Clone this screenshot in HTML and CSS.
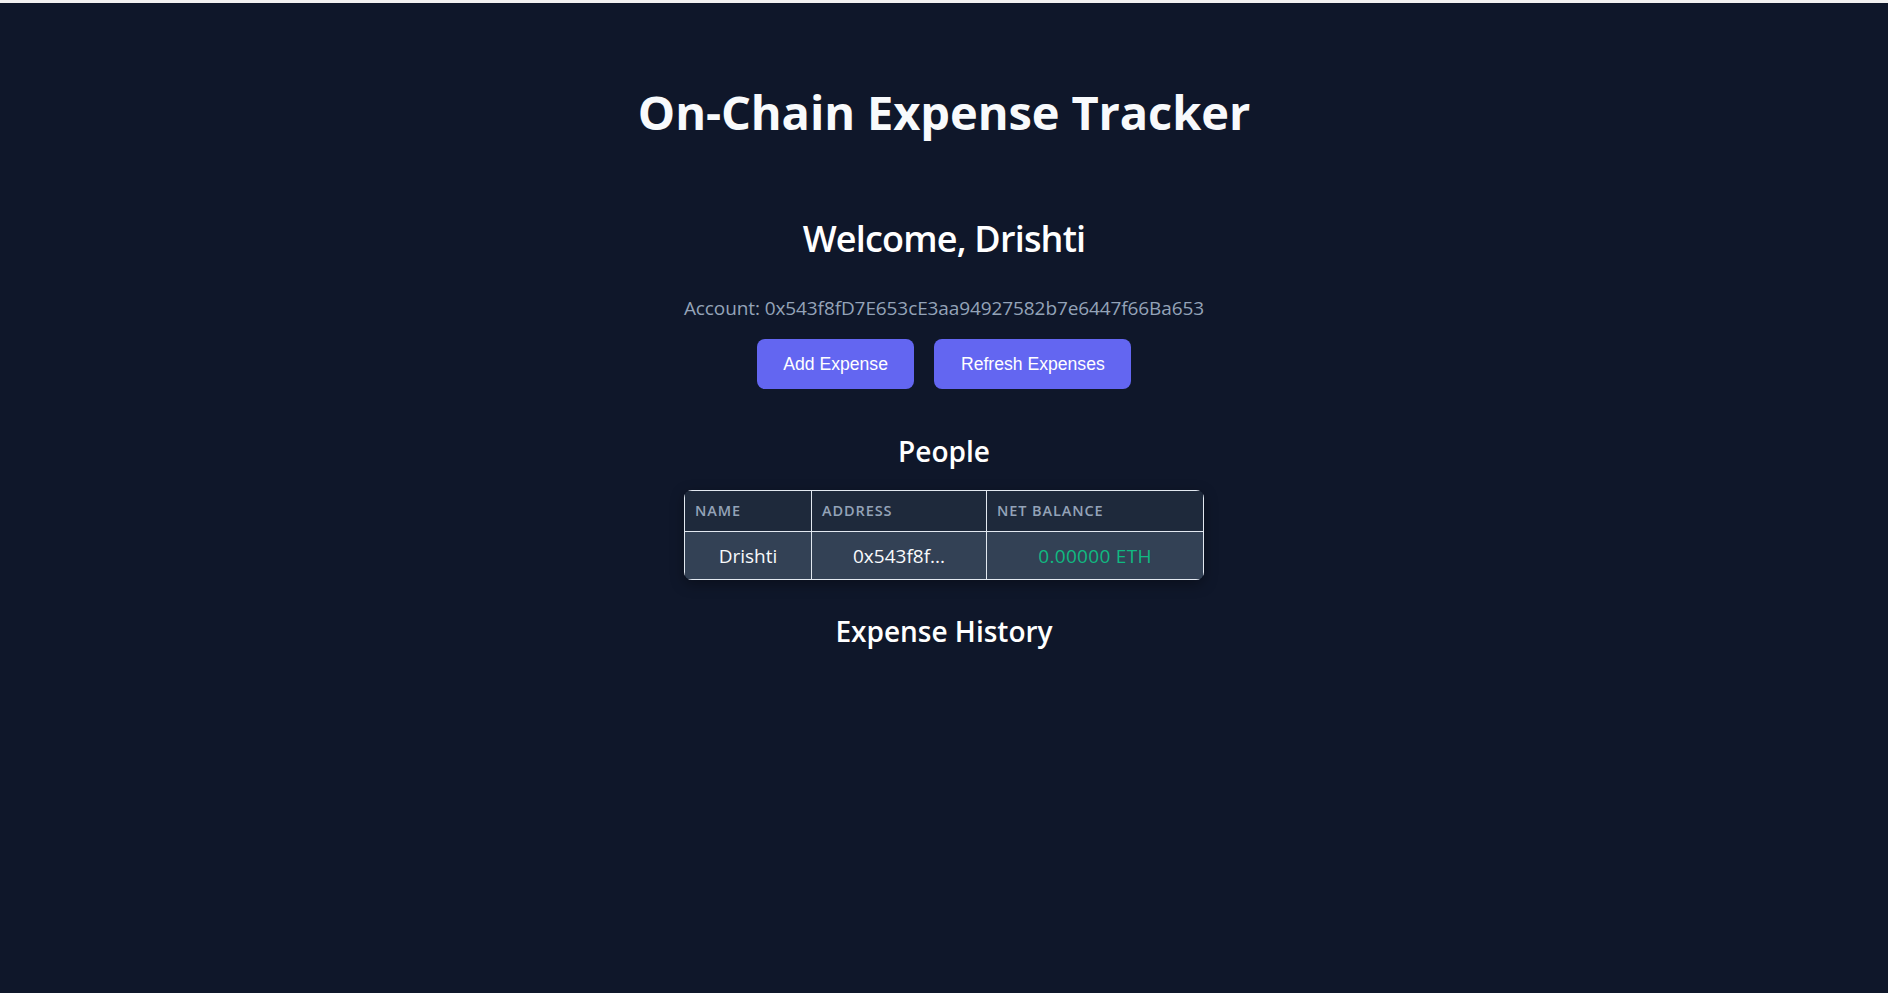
FILE: index.html
```html
<!DOCTYPE html>
<html lang="en">
<head>
<meta charset="utf-8">
<title>On-Chain Expense Tracker</title>
<link rel="stylesheet" href="styles.css">
</head>
<body>
<div class="topbar"></div>
<main class="app">
  <h1 class="title">On-Chain Expense Tracker</h1>
  <h2 class="welcome">Welcome, Drishti</h2>
  <p class="account">Account: 0x543f8fD7E653cE3aa94927582b7e6447f66Ba653</p>
  <div class="actions">
    <button class="btn">Add Expense</button>
    <button class="btn">Refresh Expenses</button>
  </div>
  <h3 class="section people-title">People</h3>
  <div class="table-wrap">
    <table class="people">
      <colgroup>
        <col class="col-name">
        <col class="col-address">
        <col class="col-balance">
      </colgroup>
      <thead>
        <tr><th>Name</th><th>Address</th><th>Net Balance</th></tr>
      </thead>
      <tbody>
        <tr><td>Drishti</td><td>0x543f8f...</td><td class="balance">0.00000 ETH</td></tr>
      </tbody>
    </table>
  </div>
  <h3 class="section history-title">Expense History</h3>
</main>
</body>
</html>
```

FILE: styles.css
```css
html, body {
  margin: 0;
  padding: 0;
  background: #0f172a;
  min-height: 100%;
}
body {
  font-family: "Open Sans", "Noto Sans", sans-serif;
  color: #f8fafc;
  min-height: 993px;
}
.topbar {
  height: 3px;
  background: #f1f1f1;
}
.app {
  display: flex;
  flex-direction: column;
  align-items: center;
  text-align: center;
}
.title {
  margin: 81px 0 0;
  font-size: 47px;
  line-height: 56px;
  font-weight: 700;
  letter-spacing: -0.1px;
  color: #f8fafc;
}
.welcome {
  margin: 77px 0 0;
  font-size: 36px;
  line-height: 44px;
  font-weight: 600;
  letter-spacing: -0.8px;
  color: #ffffff;
}
.account {
  margin: 35px 0 0;
  font-size: 19px;
  line-height: 24px;
  color: #94a3b8;
  letter-spacing: -0.1px;
}
.actions {
  margin-top: 19px;
  display: flex;
  gap: 20px;
}
.btn {
  font-family: "Liberation Sans", Arial, sans-serif;
  font-size: 17.6px;
  line-height: 20px;
  padding: 15px 26.5px;
  border: none;
  border-radius: 8px;
  background: #6366f1;
  color: #ffffff;
  cursor: pointer;
}
.section {
  margin: 0;
  font-size: 28px;
  line-height: 34px;
  font-weight: 600;
  letter-spacing: 0;
  color: #ffffff;
}
.people-title {
  margin-top: 45px;
}
.history-title {
  margin-top: 34px;
}
.table-wrap {
  margin-top: 22px;
  border-radius: 8px;
  overflow: hidden;
  box-shadow: 0 4px 14px rgba(0, 0, 0, 0.35);
}
.people {
  width: 519px;
  table-layout: fixed;
  border-collapse: collapse;
}
.col-name { width: 127px; }
.col-address { width: 175px; }
.col-balance { width: 217px; }
.people th,
.people td {
  border: 1px solid #e2e8f0;
}
.people th {
  background: #1e293b;
  color: #94a3b8;
  font-size: 14.5px;
  line-height: 20px;
  font-weight: 600;
  text-transform: uppercase;
  letter-spacing: 0.9px;
  text-align: left;
  padding: 10px 10px;
}
.people td {
  background: #334155;
  color: #f8fafc;
  font-size: 19px;
  line-height: 27px;
  text-align: center;
  padding: 11px 10px 9px;
  letter-spacing: 0;
}
.people td.balance {
  color: #10b981;
  letter-spacing: 0.3px;
}
```
